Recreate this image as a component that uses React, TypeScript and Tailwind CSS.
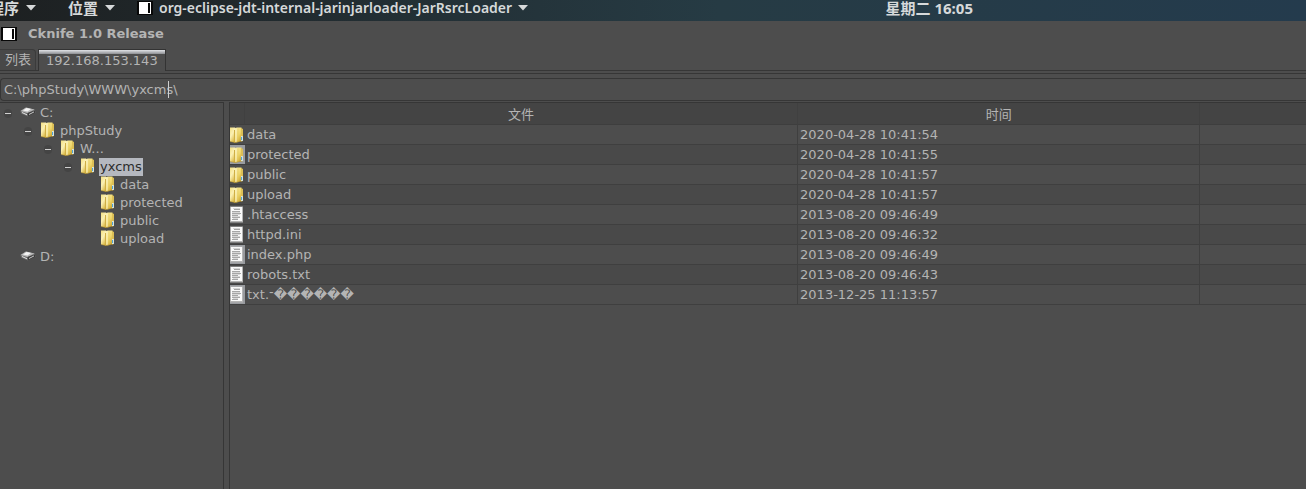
import { useState, type ReactNode } from "react";

function FolderIcon() {
  return (
    <svg width="14" height="16" viewBox="0 0 14 16" className="block shrink-0" aria-hidden="true">
      <defs>
        <linearGradient id="folderLeft" x1="0" y1="0" x2="0.6" y2="1">
          <stop offset="0" stopColor="#f3df80" />
          <stop offset="0.5" stopColor="#fbf0b4" />
          <stop offset="1" stopColor="#dcbb48" />
        </linearGradient>
        <linearGradient id="folderRight" x1="0" y1="0" x2="0.6" y2="1">
          <stop offset="0" stopColor="#faeea6" />
          <stop offset="0.6" stopColor="#efd76c" />
          <stop offset="1" stopColor="#d0ab38" />
        </linearGradient>
      </defs>
      <path d="M0 0.5H5V15.5L0 14.5z" fill="url(#folderLeft)" />
      <path d="M5 1L7 0.5H11.5V14L6.5 15.5H5z" fill="url(#folderRight)" />
      <path d="M11 1L13 2V14L11 14.5z" fill="#dcbf56" />
      <path d="M4.5 3V15.5" stroke="#cfae45" />
      <path d="M6 1.5V15" stroke="#fdf6cb" />
      <path d="M8 1.5V14.5" stroke="#dfc45c" strokeWidth="0.5" />
      <path d="M0 14.5L5 15.5L12 14" stroke="#b99430" strokeWidth="0.5" fill="none" />
      <rect x="11" y="9" width="2" height="5" fill="#d9e3d8" />
      <rect x="11" y="10" width="1" height="3" fill="#4fa3d8" />
    </svg>
  );
}

function FileIcon() {
  return (
    <svg width="14" height="17" viewBox="0 0 14 17" className="block shrink-0" aria-hidden="true">
      <rect x="0" y="0.5" width="13" height="16" fill="#b4b4b4" />
      <rect x="1" y="1" width="11" height="14" fill="#fafafa" />
      <path d="M4 3.5h6M2 5.5h8M2 7.5h9M2 9.5h6M2 11.5h8M2 13.5h6" stroke="#a6a6a6" />
      <path d="M3 2.5h7M2 6.5h8M2 8.5h8M2 10.5h8M3 12.5h5" stroke="#d8d8d8" />
    </svg>
  );
}

function DriveIcon() {
  return (
    <svg width="16" height="10" viewBox="0 0 16 10" className="block shrink-0" aria-hidden="true">
      <path d="M0.5 4L6 0.5 14.5 2.5 15.5 5.5 8 9.5 1 6.5z" fill="#6f6f6f" />
      <path d="M0.5 4L6 0.5 14.5 2.5 7.5 6z" fill="#b9b9b9" />
      <path d="M3 3.5L6.5 1 11 2 7.5 4.5z" fill="#f4f4f4" />
      <path d="M7.5 6L15 3.5V6L8 9.5z" fill="#3c3c3c" />
      <path d="M2 5.5l5 2.3" stroke="#e2e2e2" />
      <path d="M9 7.5l5-2.6" stroke="#c9c9c9" />
    </svg>
  );
}

function AppIcon() {
  return (
    <svg width="16" height="14" viewBox="0 0 16 14" className="block shrink-0" aria-hidden="true">
      <rect width="16" height="14" fill="#080808" />
      <rect x="2" y="1" width="12" height="12" fill="#fff" />
      <rect x="11" y="2" width="2" height="10" fill="#080808" />
    </svg>
  );
}

function Caret() {
  return (
    <svg width="10" height="6" viewBox="0 0 10 6" className="block shrink-0" aria-hidden="true">
      <path d="M0 0h10L5 5.5z" fill="#d6d9da" />
    </svg>
  );
}

type Node = { name: string; kind: "drive" | "folder"; selected?: boolean; children?: Node[] };

const tree: Node[] = [
  {
    name: "C:",
    kind: "drive",
    children: [
      {
        name: "phpStudy",
        kind: "folder",
        children: [
          {
            name: "W...",
            kind: "folder",
            children: [
              {
                name: "yxcms",
                kind: "folder",
                selected: true,
                children: [
                  { name: "data", kind: "folder" },
                  { name: "protected", kind: "folder" },
                  { name: "public", kind: "folder" },
                  { name: "upload", kind: "folder" },
                ],
              },
            ],
          },
        ],
      },
    ],
  },
  { name: "D:", kind: "drive" },
];

function TreeNode({ node }: { node: Node }) {
  const [open, setOpen] = useState(true);
  return (
    <li>
      <div className="flex h-[18px] items-center">
        <span className="flex w-5 shrink-0 items-center pl-1">
          {node.children && (
            <button
              type="button"
              aria-label={node.name}
              aria-expanded={open}
              onClick={() => setOpen(!open)}
              className="flex h-[9px] w-2 items-center justify-center rounded-sm bg-[#444444]"
            >
              <span className="h-px w-1.5 bg-[#d0d0d0]" />
            </button>
          )}
        </span>
        <span className={node.kind === "drive" ? "flex w-5 shrink-0 pb-0.5" : "flex w-5 shrink-0 pb-0.5 pl-px"}>
          {node.kind === "drive" ? <DriveIcon /> : <FolderIcon />}
        </span>
        <span
          className={
            node.selected
              ? "-ml-px bg-[#b5b8bf] px-px leading-[18px] text-[#2c2c2c]"
              : "leading-[18px]"
          }
        >
          {node.name}
        </span>
      </div>
      {node.children && open && (
        <ul className="pl-5">
          {node.children.map((child) => (
            <TreeNode key={child.name} node={child} />
          ))}
        </ul>
      )}
    </li>
  );
}

const files = [
  { name: "data", time: "2020-04-28 10:41:54", dir: true },
  { name: "protected", time: "2020-04-28 10:41:55", dir: true, marked: true },
  { name: "public", time: "2020-04-28 10:41:57", dir: true },
  { name: "upload", time: "2020-04-28 10:41:57", dir: true },
  { name: ".htaccess", time: "2013-08-20 09:46:49" },
  { name: "httpd.ini", time: "2013-08-20 09:46:32" },
  { name: "index.php", time: "2013-08-20 09:46:49", marked: true },
  { name: "robots.txt", time: "2013-08-20 09:46:43" },
  { name: "txt.־������", time: "2013-12-25 11:13:57", marked: true },
];

function HeadCell({ children }: { children?: ReactNode }) {
  return (
    <th className="h-[22px] border-r border-b border-r-[#404040] border-b-[#3e3e3e] px-0 pt-0.5 pb-0 text-center leading-4 font-normal last:border-r-0">
      {children}
    </th>
  );
}

export default function App() {
  const [path, setPath] = useState("C:\\phpStudy\\WWW\\yxcms\\");
  return (
    <div className="flex min-h-screen flex-col overflow-x-hidden bg-[#4d4d4d] font-['DejaVu_Sans','Noto_Sans_CJK_SC',sans-serif] text-[13px] text-[#b4b4b4]">
      <header className="grid h-[21px] grid-cols-[1fr_auto] bg-linear-to-r from-[#1d2021] via-[#263b44] via-55% to-[#243b4d] font-['Noto_Sans','Noto_Sans_CJK_SC',sans-serif] text-[15px] leading-4 font-bold text-[#d6d9da]">
        <nav className="flex h-4 items-center">
          <button type="button" className="-ml-[11px] flex shrink-0 items-center gap-[7px]">
            程序 <Caret />
          </button>
          <button type="button" className="ml-8 flex shrink-0 items-center gap-[7px]">
            位置 <Caret />
          </button>
          <button type="button" className="ml-[22px] flex shrink-0 items-center text-[14px] font-semibold whitespace-nowrap">
            <AppIcon />
            <span className="mr-1.5 ml-1.5">org-eclipse-jdt-internal-jarinjarloader-JarRsrcLoader</span>
            <Caret />
          </button>
        </nav>
        <time className="pr-[333px]">星期二 16:05</time>
      </header>

      <div className="flex h-[26px] items-center gap-[11px] pl-px">
        <AppIcon />
        <h1 className="font-bold">Cknife 1.0 Release</h1>
      </div>

      <div role="tablist" className="flex h-6 items-end border-b border-[#363636]">
        <button
          type="button"
          role="tab"
          aria-selected="false"
          className="h-[21px] rounded-tr-sm border-t border-r border-[#3b3b3b] bg-[#484848] pr-1 pl-[5px]"
        >
          列表
        </button>
        <button
          type="button"
          role="tab"
          aria-selected="true"
          className="-mb-px ml-0.5 flex h-[22px] flex-col border-x border-t border-[#333333] bg-[#4d4d4d]"
        >
          <span className="h-1 w-full bg-linear-to-b from-[#e2e4e8] to-[#8d8f93]" />
          <span className="px-[7px] leading-[14px]">192.168.153.143</span>
        </button>
      </div>

      <div className="mt-0.5 border-t border-[#363636] pt-1">
        <div className="relative rounded-l-sm border-y border-l border-[#363636]">
          <input
            aria-label="Path"
            value={path}
            onChange={(e) => setPath(e.target.value)}
            className="block h-[21px] w-full bg-transparent px-[3px] outline-none"
          />
          <span className="absolute top-0.5 left-[167px] h-[17px] w-px bg-[#d0d0d0]" />
        </div>
      </div>

      <main className="mt-px flex flex-1 gap-[5px]">
        <aside className="w-56 shrink-0 border-t border-r border-[#363636] pt-px">
          <ul>
            {tree.map((node) => (
              <TreeNode key={node.name} node={node} />
            ))}
          </ul>
        </aside>
        <section className="min-w-0 flex-1 border-t border-l border-[#363636]">
          <table className="w-full table-fixed border-separate border-spacing-0">
            <colgroup>
              <col className="w-[15px]" />
              <col className="w-[51.4%]" />
              <col className="w-[37.4%]" />
              <col />
            </colgroup>
            <thead className="bg-[#444444]">
              <tr>
                <HeadCell />
                <HeadCell>文件</HeadCell>
                <HeadCell>时间</HeadCell>
                <HeadCell />
              </tr>
            </thead>
            <tbody>
              {files.map((file) => (
                <tr key={file.name} className="even:bg-[#494949]">
                  <td
                    className={
                      file.marked
                        ? "h-5 border-b border-[#3f3f3f] bg-[#999b9f] p-0"
                        : "h-5 border-b border-[#3f3f3f] p-0"
                    }
                  >
                    {file.dir ? <FolderIcon /> : <FileIcon />}
                  </td>
                  <td className="h-5 border-r border-b border-[#3f3f3f] py-0 pr-0 pl-0.5 leading-[19px]">{file.name}</td>
                  <td className="h-5 border-r border-b border-[#3f3f3f] py-0 pr-0 pl-0.5 leading-[19px]">{file.time}</td>
                  <td className="h-5 border-b border-[#3f3f3f] p-0" />
                </tr>
              ))}
            </tbody>
          </table>
        </section>
      </main>
    </div>
  );
}
